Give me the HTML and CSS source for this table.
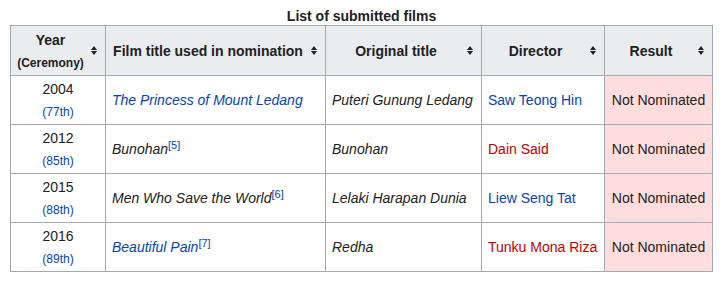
FILE: index.html
```html
<!DOCTYPE html>
<html>
<head>
<meta charset="utf-8">
<link rel="stylesheet" href="styles.css">
</head>
<body>
<table class="wikitable">
  <caption>List of submitted films</caption>
  <colgroup>
    <col class="c-year"><col class="c-film"><col class="c-orig"><col class="c-dir"><col class="c-res">
  </colgroup>
  <thead>
    <tr>
      <th class="sort">Year<br><small>(Ceremony)</small></th>
      <th class="sort">Film title used in nomination</th>
      <th class="sort">Original title</th>
      <th class="sort">Director</th>
      <th class="sort">Result</th>
    </tr>
  </thead>
  <tbody>
    <tr>
      <td class="year">2004<br><small><a href="#">(77th)</a></small></td>
      <td><i><a href="#">The Princess of Mount Ledang</a></i></td>
      <td><i>Puteri Gunung Ledang</i></td>
      <td><a href="#">Saw Teong Hin</a></td>
      <td class="no">Not Nominated</td>
    </tr>
    <tr>
      <td class="year">2012<br><small><a href="#">(85th)</a></small></td>
      <td><i>Bunohan</i><sup><a href="#">[5]</a></sup></td>
      <td><i>Bunohan</i></td>
      <td><a href="#" class="new">Dain Said</a></td>
      <td class="no">Not Nominated</td>
    </tr>
    <tr>
      <td class="year">2015<br><small><a href="#">(88th)</a></small></td>
      <td><i>Men Who Save the World</i><sup><a href="#">[6]</a></sup></td>
      <td><i>Lelaki Harapan Dunia</i></td>
      <td><a href="#">Liew Seng Tat</a></td>
      <td class="no">Not Nominated</td>
    </tr>
    <tr>
      <td class="year">2016<br><small><a href="#">(89th)</a></small></td>
      <td><i><a href="#">Beautiful Pain</a></i><sup><a href="#">[7]</a></sup></td>
      <td><i>Redha</i></td>
      <td><a href="#" class="new">Tunku Mona Riza</a></td>
      <td class="no">Not Nominated</td>
    </tr>
  </tbody>
</table>
</body>
</html>
```
FILE: styles.css
```css
html, body {
  margin: 0;
  background: #fff;
}
body {
  padding: 7px 10px;
  font-family: "Liberation Sans", Arial, sans-serif;
  font-size: 14px;
  color: #202122;
}
.wikitable {
  border-collapse: collapse;
  border: 1px solid #a2a9b1;
  background: #fff;
  color: #202122;
  table-layout: fixed;
  width: 703px;
}
.wikitable caption {
  font-weight: bold;
  text-align: center;
  line-height: 18px;
  padding-bottom: 0;
}
.c-year { width: 95px; }
.c-film { width: 220px; }
.c-orig { width: 156px; }
.c-dir { width: 123px; }
.c-res { width: 108px; }
.wikitable th,
.wikitable td {
  border: 1px solid #a2a9b1;
  padding: 2px 6px;
  line-height: 22px;
}
.wikitable th {
  background: #eaecf0;
  text-align: center;
  font-weight: bold;
  height: 45px;
}
.wikitable th.sort {
  padding-right: 21px;
  position: relative;
}
.wikitable th.sort::before,
.wikitable th.sort::after {
  content: "";
  position: absolute;
  right: 8px;
  top: 50%;
  width: 0;
  height: 0;
  border-left: 3.5px solid transparent;
  border-right: 3.5px solid transparent;
}
.wikitable th.sort::before {
  margin-top: -5px;
  border-bottom: 4px solid #202122;
}
.wikitable th.sort::after {
  margin-top: 0px;
  border-top: 4px solid #202122;
}
.wikitable th small {
  font-size: 12px;
  line-height: 20px;
}
.wikitable td {
  height: 44px;
  vertical-align: middle;
}
.wikitable td.year {
  text-align: center;
}
.wikitable td.year small {
  font-size: 12px;
  line-height: 20px;
}
.wikitable td.no {
  background: #ffdddd;
  text-align: center;
  padding: 2px 4px;
}
a {
  color: #0645ad;
  text-decoration: none;
}
a.new {
  color: #ba0000;
}
sup {
  font-size: 11px;
  line-height: 1;
  vertical-align: 5px;
}
```
